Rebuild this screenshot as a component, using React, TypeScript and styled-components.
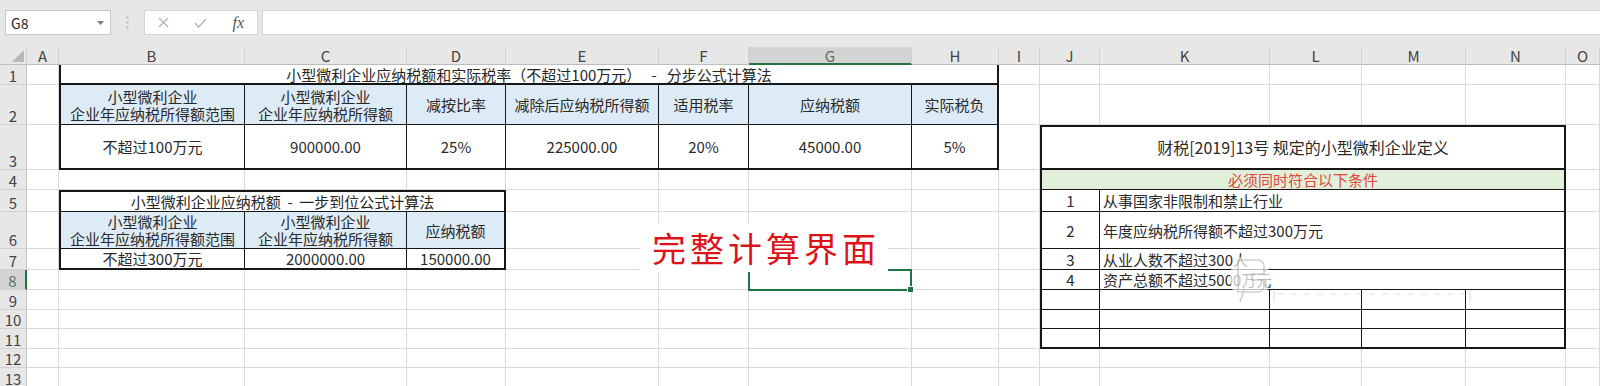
import React from 'react';
import styled, { createGlobalStyle } from 'styled-components';

const GlobalStyle = createGlobalStyle`
  html, body {
    margin: 0;
    padding: 0;
    background: #fff;
    overflow: hidden;
  }
  body {
    font-family: 'Noto Sans CJK SC', 'Noto Sans', sans-serif;
  }
`;

const COL_WIDTHS = [27, 32, 186, 162, 99, 153, 90, 163, 87, 41, 60, 170, 92, 104, 100];
const LETTERS = 'ABCDEFGHIJKLMNO'.split('');
const ROW_HEIGHTS = [20, 40, 45, 20, 22, 37, 21, 20, 20, 19, 20, 19, 20];
const ACTIVE_COL = 6; // G
const ACTIVE_ROW = 8;
const GREEN = '#217346';

type Kind = 'title' | 'head' | 'data' | 'caption' | 'band' | 'num' | 'item';
type Borders = [number, number, number, number];

interface Cell {
  c: number;
  r: number;
  cs?: number;
  kind: Kind;
  b: Borders;
  text?: string;
}

const rowOf = (r: number, start: number, texts: string[], kind: Kind, bottom: number, top = 0): Cell[] =>
  texts.map((text, i) => ({
    c: start + i,
    r,
    kind,
    text,
    b: [top, i === texts.length - 1 ? 2 : 1, bottom, i === 0 ? 2 : 0],
  }));

const HEAD_RANGE = '小型微利企业\n企业年应纳税所得额范围';
const HEAD_AMOUNT = '小型微利企业\n企业年应纳税所得额';

const CELLS: Cell[] = [
  // step-by-step table
  {
    c: 1,
    r: 1,
    cs: 7,
    kind: 'title',
    b: [0, 2, 2, 2],
    text: '小型微利企业应纳税额和实际税率（不超过100万元）   -   分步公式计算法',
  },
  ...rowOf(2, 1, [HEAD_RANGE, HEAD_AMOUNT, '减按比率', '减除后应纳税所得额', '适用税率', '应纳税额', '实际税负'], 'head', 1),
  ...rowOf(3, 1, ['不超过100万元', '900000.00', '25%', '225000.00', '20%', '45000.00', '5%'], 'data', 2),

  // one-step table
  { c: 1, r: 5, cs: 3, kind: 'title', b: [2, 2, 1, 2], text: '小型微利企业应纳税额  -  一步到位公式计算法' },
  ...rowOf(6, 1, [HEAD_RANGE, HEAD_AMOUNT, '应纳税额'], 'head', 1),
  ...rowOf(7, 1, ['不超过300万元', '2000000.00', '150000.00'], 'data', 2),

  // definition table
  { c: 9, r: 3, cs: 5, kind: 'caption', b: [2, 2, 2, 2], text: '财税[2019]13号 规定的小型微利企业定义' },
  { c: 9, r: 4, cs: 5, kind: 'band', b: [0, 2, 1, 2], text: '必须同时符合以下条件' },
  ...['从事国家非限制和禁止行业', '年度应纳税所得额不超过300万元', '从业人数不超过300人', '资产总额不超过5000万元'].flatMap(
    (text, i): Cell[] => [
      { c: 9, r: 5 + i, kind: 'num', b: [0, 1, 1, 2], text: String(i + 1) },
      { c: 10, r: 5 + i, cs: 4, kind: 'item', b: [0, 2, 1, 0], text },
    ],
  ),
  ...[9, 10, 11].flatMap((r) => rowOf(r, 9, ['', '', '', '', ''], 'data', r === 11 ? 2 : 1)),
];

const covered = new Set<string>();
CELLS.forEach((cell) => {
  for (let i = 0; i < (cell.cs ?? 1); i++) covered.add(`${cell.c + i}:${cell.r}`);
});

/* ---------- toolbar ---------- */

const Toolbar = styled.div`
  display: flex;
  align-items: flex-start;
  height: 47px;
  padding-top: 10px;
  box-sizing: border-box;
  background: #e7e7e7;
`;

const NameBox = styled.div`
  display: flex;
  align-items: center;
  justify-content: space-between;
  width: 106px;
  height: 25px;
  margin-left: 5px;
  padding: 0 6px 0 5px;
  box-sizing: border-box;
  background: #fff;
  border: 1px solid #c9c9c9;
  font-size: 14px;
  color: #222;
`;

const Grip = styled.div`
  display: flex;
  align-items: center;
  justify-content: center;
  width: 33px;
  height: 25px;
`;

const FxBox = styled.div`
  display: flex;
  align-items: center;
  width: 114px;
  height: 25px;
  box-sizing: border-box;
  background: #fff;
  border: 1px solid #d6d6d6;
`;

const FxSlot = styled.span`
  display: flex;
  align-items: center;
  justify-content: center;
  width: 38px;
  height: 100%;
`;

const FxLabel = styled.span`
  font-family: 'Liberation Serif', serif;
  font-style: italic;
  font-size: 16px;
  color: #555;
`;

const FormulaInput = styled.div`
  flex: 1;
  height: 25px;
  margin-left: 4px;
  box-sizing: border-box;
  background: #fff;
  border: 1px solid #d6d6d6;
  border-right: none;
`;

/* ---------- sheet ---------- */

const Sheet = styled.div`
  position: relative;
  display: grid;
  grid-template-columns: ${COL_WIDTHS.map((w) => `${w}px`).join(' ')} 1fr;
  grid-template-rows: 18px ${ROW_HEIGHTS.map((h) => `${h}px`).join(' ')};
  background: #fff;
`;

const Corner = styled.div`
  grid-column: 1;
  grid-row: 1;
  display: flex;
  align-items: flex-end;
  justify-content: flex-end;
  padding: 0 2px 2px 0;
  background: #e7e7e7;
  border-right: 1px solid #cfcfcf;
  border-bottom: 1px solid #bdbdbd;
`;

const ColHead = styled.div<{ $col: number; $active: boolean }>`
  grid-column: ${(p) => p.$col};
  grid-row: 1;
  display: flex;
  align-items: center;
  justify-content: center;
  background: ${(p) => (p.$active ? '#d3d3d3' : '#e7e7e7')};
  border-right: 1px solid #d2d2d2;
  border-bottom: ${(p) => (p.$active ? `2px solid ${GREEN}` : '1px solid #bdbdbd')};
  font-size: 15px;
  color: ${(p) => (p.$active ? '#53735f' : '#444')};
`;

const RowHead = styled.div<{ $row: number; $active: boolean }>`
  grid-column: 1;
  grid-row: ${(p) => p.$row};
  display: flex;
  align-items: flex-end;
  justify-content: center;
  background: ${(p) => (p.$active ? '#d3d3d3' : '#e7e7e7')};
  border-right: ${(p) => (p.$active ? `2px solid ${GREEN}` : '1px solid #c6c6c6')};
  border-bottom: 1px solid #d2d2d2;
  font-size: 15px;
  line-height: 17px;
  color: ${(p) => (p.$active ? '#53735f' : '#444')};
`;

const Blank = styled.div<{ $col: number; $row: number }>`
  grid-column: ${(p) => p.$col};
  grid-row: ${(p) => p.$row};
  border-right: 1px solid #dadada;
  border-bottom: 1px solid #dadada;
`;

const TableCell = styled.div<{ $c: number; $r: number; $cs: number; $b: Borders }>`
  grid-column: ${(p) => p.$c + 2} / span ${(p) => p.$cs};
  grid-row: ${(p) => p.$r + 1};
  display: flex;
  align-items: center;
  justify-content: center;
  min-width: 0;
  overflow: hidden;
  background: #fff;
  border-style: solid;
  border-color: #161616;
  border-width: ${(p) => p.$b.map((w) => `${w}px`).join(' ')};
  font-size: 15px;
  line-height: 17px;
  color: #2a2a2a;
  white-space: pre;
  text-align: center;
`;

const TitleCell = styled(TableCell)`
  color: #262626;
`;

const HeadCell = styled(TableCell)`
  background: #ddebf7;
`;

const DataCell = styled(TableCell)``;

const CaptionCell = styled(TableCell)`
  font-size: 16px;
`;

const BandCell = styled(TableCell)`
  background: #e2efda;
  color: #e0483a;
`;

const NumCell = styled(TableCell)``;

const ItemCell = styled(TableCell)`
  justify-content: flex-start;
  padding-left: 3px;
`;

const CELL_BY_KIND = {
  title: TitleCell,
  head: HeadCell,
  data: DataCell,
  caption: CaptionCell,
  band: BandCell,
  num: NumCell,
  item: ItemCell,
};

const Selection = styled.div`
  grid-column: ${ACTIVE_COL + 2};
  grid-row: ${ACTIVE_ROW + 1};
  position: relative;
  margin: -1px 0 -1px -1px;
  border: 2px solid ${GREEN};
  z-index: 2;
`;

const FillHandle = styled.span`
  position: absolute;
  right: -4px;
  bottom: -4px;
  width: 5px;
  height: 5px;
  background: ${GREEN};
  border: 1px solid #fff;
`;

const Callout = styled.div`
  position: absolute;
  left: 640px;
  top: 176px;
  width: 248px;
  height: 49px;
  display: flex;
  align-items: center;
  justify-content: center;
  background: #fff;
  z-index: 3;
  font-size: 34px;
  letter-spacing: 4px;
  padding-left: 4px;
  box-sizing: border-box;
  color: #dc1219;
`;

const WatermarkSvg = styled.svg`
  position: absolute;
  left: 1220px;
  top: 203px;
  z-index: 3;
  pointer-events: none;
`;

const Watermark = () => (
  <WatermarkSvg width="260" height="60" viewBox="0 0 260 60">
    <ellipse cx="30" cy="28" rx="20" ry="24" fill="rgba(255,255,255,0.7)" />
    <path
      d="M18 10 h20 a6 6 0 0 1 6 6 v8 h-12 v6 h12 v6 a6 6 0 0 1 -6 6 h-20 z M24 40 l-4 12"
      fill="none"
      stroke="rgba(150,150,150,0.45)"
      strokeWidth="1.6"
    />
    <path d="M44 22 l6 -4 M44 34 l6 4" stroke="rgba(150,150,150,0.35)" strokeWidth="1.2" />
    <path d="M58 44 h190" stroke="rgba(160,160,160,0.3)" strokeWidth="1.2" strokeDasharray="6 7" />
    <path d="M54 38 v14 M250 38 v14" stroke="rgba(160,160,160,0.3)" strokeWidth="1.2" />
  </WatermarkSvg>
);

const Caret = () => (
  <svg width="7" height="4" viewBox="0 0 7 4">
    <path d="M0 0 H7 L3.5 4 Z" fill="#7a7a7a" />
  </svg>
);

const Dots = () => (
  <svg width="3" height="13" viewBox="0 0 3 13">
    <circle cx="1.5" cy="1.5" r="1.1" fill="#b0b0b0" />
    <circle cx="1.5" cy="6.5" r="1.1" fill="#b0b0b0" />
    <circle cx="1.5" cy="11.5" r="1.1" fill="#b0b0b0" />
  </svg>
);

const Cross = () => (
  <svg width="11" height="11" viewBox="0 0 11 11">
    <path d="M1 1 L10 10 M10 1 L1 10" stroke="#b4b4b4" strokeWidth="1.3" />
  </svg>
);

const Check = () => (
  <svg width="13" height="10" viewBox="0 0 13 10">
    <path d="M1 5 L4.5 9 L12 1" fill="none" stroke="#b4b4b4" strokeWidth="1.4" />
  </svg>
);

const SelectAll = () => (
  <svg width="12" height="12" viewBox="0 0 12 12">
    <path d="M12 0 V12 H0 Z" fill="#b7b7b7" />
  </svg>
);

export default function App() {
  const blanks: React.ReactNode[] = [];
  for (let r = 1; r <= ROW_HEIGHTS.length; r++) {
    for (let c = 0; c < LETTERS.length; c++) {
      if (!covered.has(`${c}:${r}`)) blanks.push(<Blank key={`b${c}-${r}`} $col={c + 2} $row={r + 1} />);
    }
  }

  return (
    <>
      <GlobalStyle />
      <Toolbar>
        <NameBox>
          <span>G8</span>
          <Caret />
        </NameBox>
        <Grip>
          <Dots />
        </Grip>
        <FxBox>
          <FxSlot>
            <Cross />
          </FxSlot>
          <FxSlot>
            <Check />
          </FxSlot>
          <FxSlot>
            <FxLabel>fx</FxLabel>
          </FxSlot>
        </FxBox>
        <FormulaInput />
      </Toolbar>

      <Sheet>
        <Corner>
          <SelectAll />
        </Corner>
        {LETTERS.map((l, i) => (
          <ColHead key={l} $col={i + 2} $active={i === ACTIVE_COL}>
            {l}
          </ColHead>
        ))}
        {ROW_HEIGHTS.map((_, i) => (
          <RowHead key={i} $row={i + 2} $active={i + 1 === ACTIVE_ROW}>
            {i + 1}
          </RowHead>
        ))}
        {blanks}
        {CELLS.map((cell, i) => {
          const Comp = CELL_BY_KIND[cell.kind];
          return (
            <Comp key={i} $c={cell.c} $r={cell.r} $cs={cell.cs ?? 1} $b={cell.b}>
              {cell.text}
            </Comp>
          );
        })}
        <Selection>
          <FillHandle />
        </Selection>
        <Callout>完整计算界面</Callout>
        <Watermark />
      </Sheet>
    </>
  );
}
